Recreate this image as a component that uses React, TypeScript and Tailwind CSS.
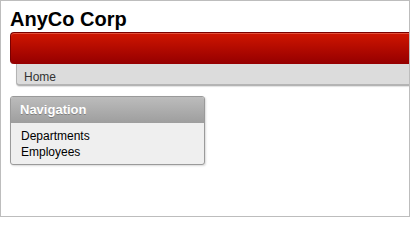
import React from 'react';

const App: React.FC = () => {
    return (
        <div className="w-[410px] h-[217px] border border-[#bdbdbd] bg-white font-['Liberation_Sans',Arial,sans-serif] overflow-hidden">
            {/* Title */}
            <h1 className="pt-[6px] pl-[9px] text-[20px] leading-6 font-bold text-black">AnyCo Corp</h1>

            {/* Red tab bar */}
            <div className="mt-[1px] ml-[9px] h-[32px] rounded-l-[4px] border-t border-l border-[#7a0000] bg-gradient-to-b from-[#d01600] to-[#950000] shadow-[inset_0_1px_0_#e0503a]"></div>

            {/* Breadcrumb bar */}
            <div className="ml-[15px] h-[22px] rounded-bl-[4px] border-l border-b-2 border-[#b4b4b4] bg-[#dcdcdc] shadow-[0_1px_1px_rgba(0,0,0,0.12)] flex items-center">
                <span className="pl-[7px] pt-[5px] text-[12px] text-[#333]">Home</span>
            </div>

            {/* Navigation region */}
            <div className="mt-[10px] ml-[9px] w-[195px] rounded-[3px] border border-[#9a9a9a] bg-[#efefef] shadow-[1px_1px_2px_rgba(0,0,0,0.15)] overflow-hidden">
                <div className="h-[26px] bg-gradient-to-b from-[#bcbcbc] to-[#9e9e9e] flex items-center pl-[9px]">
                    <span className="text-[13px] font-bold text-white [text-shadow:0_1px_0_rgba(0,0,0,0.25)]">Navigation</span>
                </div>
                <ul className="pt-[5px] pb-[4px] pl-[10px] text-[12px] leading-[16px] text-black">
                    <li>Departments</li>
                    <li>Employees</li>
                </ul>
            </div>
        </div>
    );
};

export default App;
